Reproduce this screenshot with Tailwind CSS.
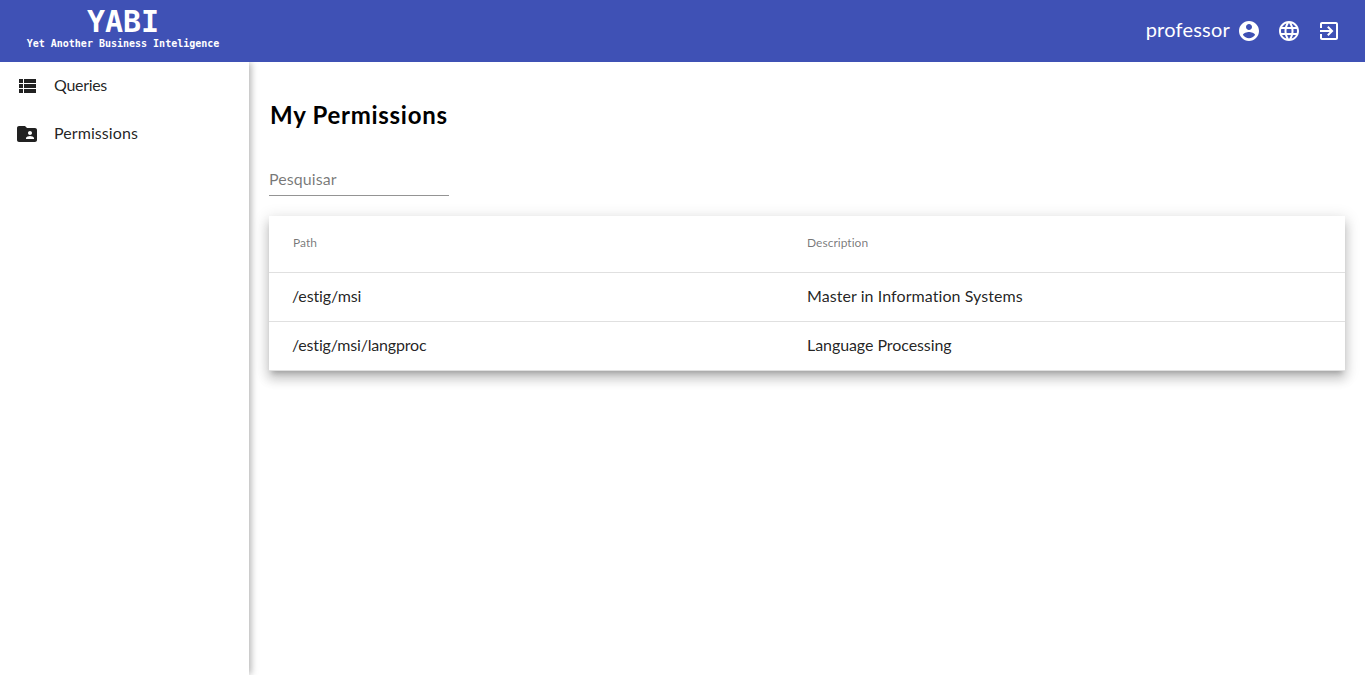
<!DOCTYPE html>
<html lang="en">
<head>
<meta charset="utf-8">
<title>YABI</title>
<script src="https://cdn.jsdelivr.net/npm/@tailwindcss/browser@4"></script>
</head>
<body class="h-screen overflow-hidden bg-white font-['Lato',sans-serif] text-[16px] text-black/87 flex flex-col">
<header class="h-[62px] shrink-0 bg-[#3f51b5] text-white flex justify-between relative z-20">
  <div class="w-[246px] pt-[6px] flex flex-col items-center font-['DejaVu_Sans_Mono',monospace] font-bold whitespace-nowrap">
    <span class="text-[30px] leading-[32px]">YABI</span>
    <span class="text-[10px] leading-[12px]">Yet Another Business Inteligence</span>
  </div>
  <div class="flex items-center pr-6">
    <span class="text-[20px] leading-6 tracking-[0.22px] pb-[5px] mr-[7px]">professor</span>
    <div class="flex gap-4">
      <svg class="size-6" viewBox="0 0 24 24" fill="currentColor"><path d="M12 2C6.48 2 2 6.48 2 12s4.48 10 10 10 10-4.48 10-10S17.52 2 12 2zm0 3c1.66 0 3 1.34 3 3s-1.34 3-3 3-3-1.34-3-3 1.34-3 3-3zm0 14.2c-2.5 0-4.71-1.28-6-3.22.03-1.99 4-3.08 6-3.08 1.99 0 5.97 1.09 6 3.08-1.29 1.94-3.5 3.22-6 3.22z"/></svg>
      <svg class="size-6" viewBox="0 0 24 24" fill="currentColor"><path d="M11.99 2C6.47 2 2 6.48 2 12s4.47 10 9.99 10C17.52 22 22 17.52 22 12S17.52 2 11.99 2zm6.93 6h-2.95c-.32-1.25-.78-2.45-1.38-3.56 1.84.63 3.37 1.91 4.33 3.56zM12 4.04c.83 1.2 1.48 2.53 1.91 3.96h-3.82c.43-1.43 1.08-2.76 1.91-3.96zM4.26 14C4.1 13.36 4 12.69 4 12s.1-1.36.26-2h3.38c-.08.66-.14 1.32-.14 2s.06 1.34.14 2H4.26zm.82 2h2.95c.32 1.25.78 2.45 1.38 3.56-1.84-.63-3.37-1.9-4.33-3.56zm2.95-8H5.08c.96-1.66 2.49-2.93 4.33-3.56C8.81 5.55 8.35 6.75 8.03 8zM12 19.96c-.83-1.2-1.48-2.53-1.91-3.96h3.82c-.43 1.43-1.08 2.76-1.91 3.96zM14.34 14H9.66c-.09-.66-.16-1.32-.16-2s.07-1.35.16-2h4.68c.09.65.16 1.32.16 2s-.07 1.34-.16 2zm.25 5.56c.6-1.11 1.06-2.31 1.38-3.56h2.95c-.96 1.65-2.49 2.93-4.33 3.56zM16.36 14c.08-.66.14-1.32.14-2s-.06-1.34-.14-2h3.38c.16.64.26 1.31.26 2s-.1 1.36-.26 2h-3.38z"/></svg>
      <svg class="size-6" viewBox="0 0 24 24" fill="currentColor"><path d="M10.09 15.59L11.5 17l5-5-5-5-1.41 1.41L12.67 11H3v2h9.67l-2.58 2.59zM19 3H5c-1.11 0-2 .9-2 2v4h2V5h14v14H5v-4H3v4c0 1.1.89 2 2 2h14c1.1 0 2-.9 2-2V5c0-1.1-.9-2-2-2z"/></svg>
    </div>
  </div>
</header>
<div class="flex flex-1 min-h-0">
  <nav class="w-[249px] shrink-0 bg-white relative z-10 shadow-[3px_0_6px_-1px_rgba(0,0,0,0.2),2px_0_9px_rgba(0,0,0,0.12)]">
    <a class="flex items-center h-12 pl-[15px] gap-[15px]">
      <svg class="size-6" viewBox="0 0 24 24" fill="currentColor"><path d="M4 14h4v-4H4v4zm0 5h4v-4H4v4zM4 9h4V5H4v4zm5 5h12v-4H9v4zm0 5h12v-4H9v4zM9 5v4h12V5H9z"/></svg>
      <span class="pb-[2px] tracking-[-0.3px]">Queries</span>
    </a>
    <a class="flex items-center h-12 pl-[15px] gap-[15px]">
      <svg class="size-6" viewBox="0 0 24 24" fill="currentColor"><path d="M20 6h-8l-2-2H4c-1.1 0-1.99.9-1.99 2L2 18c0 1.1.9 2 2 2h16c1.1 0 2-.9 2-2V8c0-1.1-.9-2-2-2zm-5 3c1.1 0 2 .9 2 2s-.9 2-2 2-2-.9-2-2 .9-2 2-2zm4 8h-8v-1c0-1.33 2.67-2 4-2s4 .67 4 2v1z"/></svg>
      <span class="pb-[2px] tracking-[0.08px]">Permissions</span>
    </a>
  </nav>
  <main class="flex-1 px-5">
    <h2 class="mt-[37px] pl-px text-[24px] leading-8 font-bold tracking-[0.72px] text-black">My Permissions</h2>
    <div class="mt-[35px] h-[30px] w-[180px] border-b border-black/42 text-black/54 leading-[26px] tracking-[0.08px]">Pesquisar</div>
    <div class="mt-5 bg-white shadow-[0_5px_5px_-3px_rgba(0,0,0,0.2),0_8px_10px_1px_rgba(0,0,0,0.14),0_3px_14px_2px_rgba(0,0,0,0.12)]">
      <div class="flex h-[57px] items-center border-b border-black/12 pl-6 pb-[2px] text-[12px] text-black/54 tracking-[0.02px]"><span class="w-[514px]">Path</span><span>Description</span></div>
      <div class="flex h-[49px] items-center border-b border-black/12 pl-[23px] pb-[2px]"><span class="w-[515px] tracking-[-0.13px]">/estig/msi</span><span class="tracking-[0.07px]">Master in Information Systems</span></div>
      <div class="flex h-[49px] items-center border-b border-black/12 pl-[23px] pb-[2px]"><span class="w-[515px] tracking-[-0.18px]">/estig/msi/langproc</span><span class="tracking-[-0.07px]">Language Processing</span></div>
    </div>
  </main>
</div>
</body>
</html>
